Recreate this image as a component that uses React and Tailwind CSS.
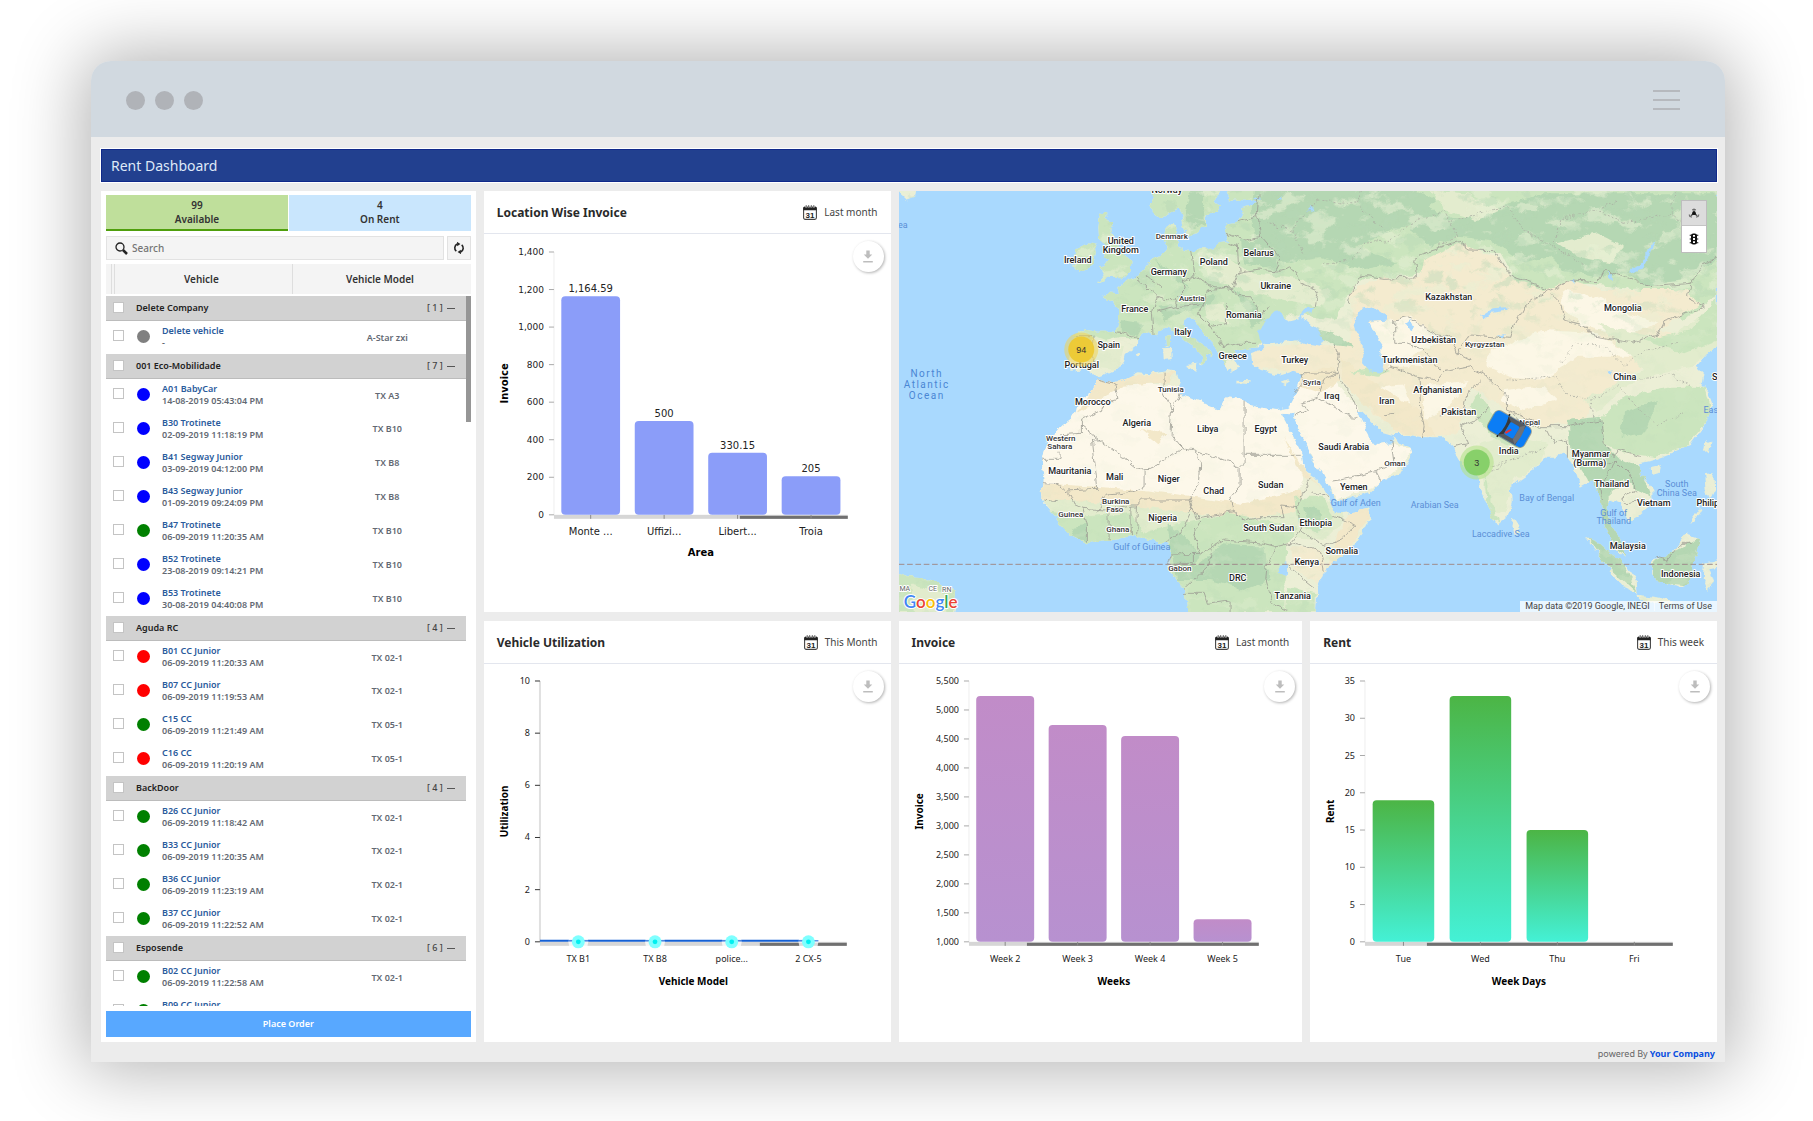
import React from "react";

const COLORS = {
  gray: "bg-[#808080]",
  blue: "bg-[#0000ff]",
  green: "bg-[#008000]",
  red: "bg-[#ff0000]",
};

const GROUPS = [
  { name: "Delete Company", count: 1, items: [["Delete vehicle", "-", "A-Star zxi", "gray"]] },
  {
    name: "001 Eco-Mobilidade",
    count: 7,
    items: [
      ["A01 BabyCar", "14-08-2019 05:43:04 PM", "TX A3", "blue"],
      ["B30 Trotinete", "02-09-2019 11:18:19 PM", "TX B10", "blue"],
      ["B41 Segway Junior", "03-09-2019 04:12:00 PM", "TX B8", "blue"],
      ["B43 Segway Junior", "01-09-2019 09:24:09 PM", "TX B8", "blue"],
      ["B47 Trotinete", "06-09-2019 11:20:35 AM", "TX B10", "green"],
      ["B52 Trotinete", "23-08-2019 09:14:21 PM", "TX B10", "blue"],
      ["B53 Trotinete", "30-08-2019 04:40:08 PM", "TX B10", "blue"],
    ],
  },
  {
    name: "Aguda RC",
    count: 4,
    items: [
      ["B01 CC Junior", "06-09-2019 11:20:33 AM", "TX 02-1", "red"],
      ["B07 CC Junior", "06-09-2019 11:19:53 AM", "TX 02-1", "red"],
      ["C15 CC", "06-09-2019 11:21:49 AM", "TX 05-1", "green"],
      ["C16 CC", "06-09-2019 11:20:19 AM", "TX 05-1", "red"],
    ],
  },
  {
    name: "BackDoor",
    count: 4,
    items: [
      ["B26 CC Junior", "06-09-2019 11:18:42 AM", "TX 02-1", "green"],
      ["B33 CC Junior", "06-09-2019 11:20:35 AM", "TX 02-1", "green"],
      ["B36 CC Junior", "06-09-2019 11:23:19 AM", "TX 02-1", "green"],
      ["B37 CC Junior", "06-09-2019 11:22:52 AM", "TX 02-1", "green"],
    ],
  },
  {
    name: "Esposende",
    count: 6,
    items: [
      ["B02 CC Junior", "06-09-2019 11:22:58 AM", "TX 02-1", "green"],
      ["B09 CC Junior", "", "", "green"],
    ],
  },
];

function Check({ label }) {
  return (
    <input
      type="checkbox"
      aria-label={label}
      className="block size-[11px] shrink-0 appearance-none border border-[#c4c4c4] bg-white checked:bg-[#58a8ff]"
    />
  );
}

function VehiclePanel() {
  return (
    <aside className="row-span-2 flex flex-col bg-white px-[5px] pt-1 pb-[5px]">
      <div className="flex h-9 shrink-0 gap-px text-[10px] leading-[14px] font-semibold text-[#333]">
        <button className="flex-1 border-b-2 border-[#4f9f0c] bg-[#bfdf9b]">
          99
          <br />
          Available
        </button>
        <button className="flex-1 border-b-2 border-[#c9e6fd] bg-[#c9e6fd]">
          4
          <br />
          On Rent
        </button>
      </div>

      <div className="mt-[5px] flex h-6 shrink-0 gap-[3px]">
        <label className="flex flex-1 items-center gap-1 border border-[#e2e2e2] bg-[#f4f4f4] pl-2">
          <svg viewBox="0 0 13 13" className="size-[13px] shrink-0" fill="none" stroke="#222" aria-hidden="true">
            <circle cx="5" cy="5" r="4" strokeWidth="1.3" />
            <path d="M8 8l4 4" strokeWidth="2.5" />
          </svg>
          <input
            type="text"
            aria-label="Search"
            placeholder="Search"
            className="w-full bg-transparent text-[10px] font-medium outline-none placeholder:text-[#757575]"
          />
        </label>
        <button
          aria-label="Refresh"
          className="flex w-6 items-center justify-center border border-[#e2e2e2] bg-[#f4f4f4]"
        >
          <svg viewBox="0 0 12 12" className="size-3" aria-hidden="true">
            <path d="M3.300 9.200A4.200 4.200 0 0 1 4.300 2.100M8.700 2.800A4.200 4.200 0 0 1 7.700 9.900" fill="none" stroke="#222" strokeWidth="1.600" />
            <path d="M4 -.2 7.400 2 4.200 4.300ZM8 12.200 4.600 10 7.800 7.700Z" fill="#222" />
          </svg>
        </button>
      </div>

      <div className="relative mt-1 h-0 grow overflow-hidden">
        <table className="w-full table-fixed border-collapse">
          <colgroup>
            <col className="w-[5px]" />
            <col className="w-[3px]" />
            <col className="w-[49%]" />
            <col />
            <col className="w-[5px]" />
          </colgroup>
          <thead>
            <tr className="h-[30px] bg-[#f4f4f4] text-[10px] text-[#333]">
              <td className="border-r border-[#dedede]" />
              <td className="border-r border-[#dedede]" />
              <th className="border-r border-[#dedede] pr-1 font-semibold">Vehicle</th>
              <th colSpan={2} className="pr-1 font-semibold">
                Vehicle Model
              </th>
            </tr>
            <tr className="h-[2px]">
              <td colSpan={5} />
            </tr>
          </thead>
          {GROUPS.map((g) => (
            <tbody key={g.name}>
              <tr className="h-6">
                <td colSpan={4} className="border-b border-[#bcbcbc] bg-[#d2d2d2] p-0">
                  <div className="flex items-center pr-[11px] pl-[7px] text-[9px] leading-3 text-[#222]">
                    <Check label={"Select " + g.name} />
                    <span className="ml-3 flex-1 font-semibold">{g.name}</span>
                    <span className="mr-1 font-medium text-[#444]">[ {g.count} ]</span>
                    <button aria-label={"Collapse " + g.name} className="mt-0.5 h-px w-2 bg-[#555]" />
                  </div>
                </td>
                <td />
              </tr>
              {g.items.map(([name, time, model, color]) => (
                <tr key={name} className="h-[34px]">
                  <td colSpan={3} className="p-0">
                    <div className="flex items-center pl-[7px]">
                      <span className="pb-1">
                        <Check label={"Select " + name} />
                      </span>
                      <span className="mr-3 ml-[13px] pb-0.5">
                        <span className={"block size-[13px] rounded-full " + COLORS[color]} />
                      </span>
                      <span className="text-[9px] leading-3 font-semibold">
                        <a href="#vehicle" className="block text-[#2a5b9c]">
                          {name}
                        </a>
                        <span className="block min-h-3 text-[#636973]">{time}</span>
                      </span>
                    </div>
                  </td>
                  <td className="p-0 pl-4 text-center text-[9px] font-semibold text-[#636973]">{model}</td>
                  <td />
                </tr>
              ))}
            </tbody>
          ))}
        </table>
        <div className="absolute top-8 right-0 h-[126px] w-[5px] bg-[#969696]" />
      </div>

      <button className="mt-[5px] h-[26px] shrink-0 bg-[#58a8ff] text-[9px] font-semibold text-white">Place Order</button>
    </aside>
  );
}

function CalendarIcon() {
  return (
    <svg viewBox="0 0 14 15" className="h-[15px] w-[14px]" aria-hidden="true">
      <rect x="0.6" y="2" width="12.8" height="12.4" rx="1.6" fill="#fff" stroke="#444" strokeWidth="1.1" />
      <path d="M0.4 5.2V3.2q0-1.4 1.4-1.4h10.4q1.400 0 1.4 1.4v2z" fill="#222" />
      <path d="M3.2.4v2.200M5.7.4v2.200M8.3.4v2.200M10.8.4v2.200" stroke="#fff" strokeWidth="1.8" />
      <path d="M3.2.2v2.200M5.7.2v2.200M8.3.2v2.200M10.8.2v2.200" stroke="#222" strokeWidth="0.8" />
      <text x="7" y="12.900" textAnchor="middle" fontFamily="'Liberation Sans', sans-serif" fontSize="8" fontWeight="700" fill="#222">
        31
      </text>
    </svg>
  );
}

function ChartCard({ title, period, children }) {
  return (
    <section className="flex min-w-0 flex-col bg-white">
      <header className="flex h-[43px] shrink-0 items-center justify-between border-b border-[#e3e6ee] px-[13px] pt-px">
        <h2 className="text-[12px] font-bold text-[#2a2a2a]">{title}</h2>
        <button className="flex items-center gap-[7px] text-[10px] text-[#444]">
          <CalendarIcon />
          {period}
        </button>
      </header>
      <div className="relative">
        {children}
        <button
          aria-label={"Download " + title}
          className="absolute top-[7px] right-[7px] flex size-[31px] items-center justify-center rounded-full bg-white shadow-[1px_1px_3px_rgba(0,0,0,0.3)]"
        >
          <svg viewBox="0 0 12 13" className="h-[13px] w-3" fill="#bdbdbd" aria-hidden="true">
            <path d="M4.3 0.5h3.4v4h2.6L6 8.8 1.7 4.5h2.6z" />
            <rect x="1.2" y="11" width="9.6" height="1.5" />
          </svg>
        </button>
      </div>
    </section>
  );
}

/* Geometry: x0..x1 is the category axis, top..bottom the value axis. */
function Chart({ width, x0, x1, top, bottom, min, max, step, data, thumb, xTitle, yTitle, fill, verdana, line }) {
  const scale = (v) => bottom - ((v - min) / (max - min)) * (bottom - top);
  const ticks = [];
  for (let v = min; v <= max; v += step) ticks.push(v);
  const cell = (x1 - x0) / data.length;
  const family = verdana ? "'DejaVu Sans', sans-serif" : "'Noto Sans', sans-serif";
  const labelSize = verdana ? 10 : 9;
  const id = "fill-" + yTitle + width;
  return (
    <svg viewBox={`0 0 ${width} 378`} className="block w-full" fontFamily={family} fontSize="9" fill="#222" role="img" aria-label={yTitle + " by " + xTitle}>
      <defs>
        <linearGradient id={id} x1="0" y1="0" x2="0" y2="1">
          <stop offset="0" stopColor={fill[0]} />
          <stop offset="1" stopColor={fill[1]} />
        </linearGradient>
      </defs>
      <path d={`M${x0} ${top}V${bottom}`} stroke={line ? "#e0e0e0" : "#eee"} strokeWidth={line ? 2 : 1} />
      {ticks.map((v) => (
        <g key={v}>
          <path d={`M${x0 - 5} ${scale(v)}h5`} stroke={line ? "#333" : "#aaa"} />
          <text x={x0 - 10} y={scale(v) + 3} textAnchor="end">
            {v.toLocaleString("en-US")}
          </text>
        </g>
      ))}
      <rect x={x0} y={bottom} width={x1 - x0} height="4" fill="#d6d6d6" />
      <rect x={thumb} y={bottom + 1} width={x1 - thumb} height="3" fill="#707070" />
      {line && <path d={`M${x0} ${bottom - 1}H${x1 - cell / 2}`} stroke="#1560d4" strokeWidth="2" />}
      {data.map(([label, value], i) => {
        const cx = x0 + cell * (i + 0.5);
        return (
          <g key={label}>
            {line ? (
              <g>
                <circle cx={cx} cy={bottom} r="10" fill="#fff" fillOpacity="0.75" />
                <path d={`M${cx - 10} ${bottom - 1}h20`} stroke="#1560d4" strokeWidth="1" />
                <circle cx={cx} cy={bottom} r="6.5" fill="#7fffff" />
                <circle cx={cx} cy={bottom} r="2.4" fill="#00f0f0" />
              </g>
            ) : (
              <g>
                <path d={`M${cx} ${bottom}v4`} stroke="#8a8a8a" strokeWidth="1" />
                {value > min && (
                  <rect x={cx - cell * 0.4} y={scale(value)} width={cell * 0.8} height={bottom - scale(value)} rx="4" fill={`url(#${id})`} />
                )}
              </g>
            )}
            {verdana && (
              <text x={cx} y={scale(value) - 4} textAnchor="middle" fontSize={labelSize}>
                {value.toLocaleString("en-US")}
              </text>
            )}
            <text x={cx} y={bottom + 20} textAnchor="middle" fontSize={labelSize}>
              {label}
            </text>
          </g>
        );
      })}
      <text x={(x0 + x1) / 2} y={bottom + (verdana ? 41 : 43)} textAnchor="middle" fontSize="10" fontWeight="700" fill="#000">
        {xTitle}
      </text>
      <text transform={`translate(24 ${(top + bottom) / 2}) rotate(-90)`} textAnchor="middle" fontSize="10" fontWeight="700" fill="#000">
        {yTitle}
      </text>
    </svg>
  );
}

const LAND = [
  // Eurasia and Africa
  "M2481 20V500L2450 520 2415 560 2435 580 2430 610 2455 640 2465 680 2440 740 2400 795 2330 825 2290 840 2245 850 2250 880 2285 930 2285 970 2245 1005 2210 1025 2190 970 2155 955 2150 990 2160 1030 2185 1070 2205 1130 2175 1105 2150 1050 2135 1010 2130 960 2115 920 2105 900 2070 920 2050 860 2035 835 2020 820 1990 830 1970 830 1940 860 1890 895 1860 920 1863 970 1850 1010 1820 1035 1790 980 1765 920 1755 870 1720 860 1700 825 1690 800 1660 772 1595 772 1550 765 1510 765 1475 755 1440 720 1415 695 1398 695 1410 720 1435 765 1438 780 1448 792 1465 795 1500 790 1512 768 1520 790 1555 800 1562 825 1530 880 1470 905 1440 935 1380 955 1335 962 1320 930 1295 880 1260 830 1230 760 1203 702 1212 715 1205 700 1170 698 1205 765 1232 820 1240 870 1270 890 1295 920 1315 955 1330 990 1345 1000 1390 995 1440 985 1440 1010 1415 1060 1380 1110 1330 1145 1295 1180 1280 1220 1275 1310H892L885 1260 880 1225 850 1190 835 1160 840 1105 830 1085 775 1085 740 1063 680 1078 640 1080 590 1090 540 1065 510 1035 490 1005 458 970 450 935 462 905 456 870 452 835 465 800 485 770 510 735 555 700 562 665 600 640 620 598 660 608 700 597 740 577 780 580 830 570 858 575 868 600 860 625 870 645 900 655 930 665 960 682 985 690 992 662 1020 650 1060 662 1080 675 1130 687 1160 690 1195 683 1207 660 1220 630 1228 600 1236 578 1210 572 1170 585 1135 575 1110 570 1085 550 1080 520 1100 512 1125 508 1115 498 1090 500 1060 505 1030 510 1045 530 1030 540 1042 560 1025 578 1008 560 990 530 975 500 948 470 920 442 915 418 895 408 878 422 885 450 905 475 930 495 955 510 968 528 945 522 948 540 928 555 935 528 908 500 878 480 850 455 828 440 790 465 760 455 742 470 742 495 705 522 700 542 682 565 650 580 620 590 605 583 580 568 540 572 535 540 545 500 548 465 580 448 620 455 678 455 685 420 685 385 670 365 633 352 655 338 685 340 680 322 710 302 742 288 765 265 780 242 802 232 818 215 830 200 820 175 824 145 848 125 860 150 852 170 862 195 882 207 905 212 930 205 970 207 985 190 1012 187 1005 160 1010 130 1045 125 1057 105 1052 85 1085 76 1115 72 1075 62 1020 58 1008 40 1015 20Z",
  // Scandinavia
  "M775 20 790 50 778 75 788 102 815 112 840 95 862 85 872 110 880 142 896 168 918 160 942 140 942 110 975 98 988 80 972 62 990 20Z",
  // Great Britain and Ireland
  "M625 98 655 100 640 118 668 125 655 150 672 180 695 215 722 250 720 270 700 292 660 290 622 308 645 280 625 262 660 240 640 225 650 200 622 175 620 140Z",
  "M580 190 610 192 618 215 612 255 560 275 545 258 560 210Z",
  // Mediterranean islands
  "M826 470l10 -2 2 28 -8 6zM820 505l18 -2 2 35 -18 2zM882 555l38 -4 -4 24zM1040 602l40 2 -2 8 -38 -2zM1172 608l22 -8 -6 16zM735 524l12 -3 1 9 -10 2z",
  // Sri Lanka, Hainan, Taiwan
  "M1868 1012l18 28 0 22 -16 2 -8 -22zM2280 862l28 -6 -4 20 -20 6zM2448 780l14 8 -8 32 -12 -10z",
  // Indonesia, Borneo, Philippines
  "M2082 1072 2125 1088 2165 1125 2200 1150 2235 1200 2238 1242 2200 1225 2165 1185 2130 1130ZM2236 1244 2290 1250 2345 1262 2330 1274 2250 1262ZM2282 1140 2320 1135 2350 1110 2385 1062 2428 1078 2412 1130 2405 1185 2380 1225 2310 1210 2285 1180ZM2440 1150 2481 1138V1160L2455 1165 2470 1210 2450 1232 2436 1195ZM2440 882 2468 880 2470 930 2455 960 2445 930ZM2400 1030 2430 985 2434 990 2410 1030Z",
  // Brazil and Greenland
  "M10 1175 50 1192 95 1195 140 1210 185 1232 200 1262 192 1310H10ZM10 20H75L70 50 50 58Z",
].join("");

const TERRAIN = [
  // northern forest belt
  ["#cbe5be", "M500 0H2500V330L2380 420 2250 330 2080 310 1980 330 1900 350 1830 220 1700 210 1600 280 1400 300 1330 420 1200 400 1100 500 980 560 900 540 800 480 690 470 520 520Z"],
  ["#b5d7b3", "M1090 20H1560L1640 60 1560 130 1400 200 1520 250 1420 270 1290 230 1180 250 1100 200 1080 110ZM1560 60 1700 120 1760 100 1960 40H2481V240L2380 300 2270 320 2200 280 2120 290 2020 270 1980 230 1900 250 1800 180 1700 170 1620 200 1560 150Z"],
  ["#e3ecce", "M560 520 620 470 700 500 680 570 580 560ZM1010 230 1080 280 1200 290 1320 330 1300 380 1180 360 1060 330 960 300 920 220ZM1620 30 1720 40 1830 90 1760 120 1660 90ZM2000 190 2120 160 2200 200 2160 250 2060 230ZM940 375 1000 370 1020 430 950 420Z"],
  ["#b5d7b3", "M790 240 870 290 900 330 850 300ZM900 30H940V130L900 150 880 100ZM800 380 920 365 970 340 960 372 880 395 820 420ZM1030 330 1090 370 1120 420 1080 440 1060 380ZM690 420 760 430 740 465 690 455ZM1050 180 1150 190 1160 270 1060 250ZM1130 40 1200 130 1180 180 1110 120Z"],
  // steppe
  ["#f4ebcf", "M1380 330 1480 290 1590 290 1600 240 1700 190 1820 230 1870 300 1960 330 2040 300 2130 330 2380 330 2430 370 2300 450 2400 470 2380 520 2260 560 2140 640 2080 720 1960 740 1840 690 1740 620 1700 760 1600 770 1440 700 1380 590 1240 580 1080 560 1090 510 1230 490 1320 500 1380 480Z"],
  ["#fcf7e6", "M1430 430 1560 410 1660 480 1560 530 1600 560 1500 560 1460 500ZM1800 510 1960 450 2120 460 2240 530 2060 530 1960 600 1860 590 1790 560ZM1840 630 1960 620 2000 660 1900 690 1830 660ZM2010 330 2120 350 2200 400 2300 430 2200 470 2080 440 2020 390ZM1600 620 1740 600 1660 690 1600 720ZM1440 620 1540 610 1560 680 1500 700Z"],
  ["#fdf8ea", "M1210 610 1320 590 1400 680 1450 780 1570 810 1480 910 1340 960 1220 760Z"],
  ["#f3e8c9", "M1230 580 1320 560 1350 600 1290 640 1230 620ZM1350 530 1440 600 1580 690 1640 770 1520 760 1440 690 1360 610Z"],
  // subtropical Asia
  ["#e2eccd", "M1770 790 1860 760 1970 790 1950 850 1870 900 1840 1000 1800 990 1770 880ZM2120 430 2320 480 2481 380V500L2400 560 2300 580 2200 620 2120 700 2080 660 2260 570Z"],
  ["#cbe5be", "M2110 740 2200 650 2330 620 2440 620 2465 700 2390 800 2290 830 2200 820 2130 790ZM2260 480 2400 450 2481 350V480L2380 520ZM1760 640 1840 740 1900 760 1880 800 1800 770 1740 680ZM1380 575 1460 590 1500 575 1450 560ZM1780 870 1800 960 1830 1030 1790 1000Z"],
  ["#b5d7b3", "M2030 720 2130 710 2140 790 2180 830 2250 860 2280 950 2200 900 2150 950 2205 1130 2140 1050 2090 900 2040 820ZM2090 1070 2180 1110 2240 1240 2150 1160ZM2280 1150 2430 1070 2400 1220 2300 1210ZM2200 700 2300 660 2260 760 2190 770ZM1245 440 1330 460 1390 500 1320 490Z"],
  // Sahara, Sahel and the equatorial belt
  ["#fdf8ea", "M600 600 1240 650 1240 900 1200 960 1000 980 450 980 450 800Z"],
  ["#f3e8c9", "M600 595 860 575 830 610 700 620 640 650 560 700 600 640ZM750 750 830 760 800 790ZM450 910 760 930 1060 970 1230 930 1250 1000 1060 1010 880 1000 640 990 450 960ZM1180 770 1240 870 1290 920 1230 880ZM1400 960 1440 1000 1360 1130 1300 1200 1340 1060Z"],
  ["#e2eccd", "M450 960 700 970 900 1000 1060 1020 1230 990 1330 960 1360 1020 1300 1080 1100 1060 900 1060 700 1060 540 1050Z"],
  ["#cbe5be", "M460 990 560 1010 720 1000 760 1060 860 1030 1020 1000 1220 1040 1190 1090 1180 1300 880 1300 840 1160 830 1090 560 1090ZM1210 950 1290 950 1330 1010 1280 1060 1220 1030ZM1190 1220 1275 1240V1300H1180Z"],
  ["#b5d7b3", "M830 1030 870 1060 930 1120 910 1160 1000 1090 1120 1100 1140 1200 1060 1230 960 1200 860 1200 840 1110ZM540 1040 590 1035 590 1085 550 1070ZM1240 980 1290 990 1290 1030 1250 1030Z"],
  ["#f4ebcf", "M1200 1100 1290 1110 1310 1170 1280 1210 1210 1170Z"],
  ["#cbe5be", "M10 1175 120 1200 200 1240 190 1300H10Z"],
  ["#e2eccd", "M60 1210 160 1240 170 1300H70Z"],
];

const BORDERS =
  "M620 600 672 612 682 655 640 665 638 688 572 718 572 760 510 765M572 740 745 870 780 868 872 803 838 760 842 690 820 640 820 575M842 690 862 660 868 640M872 803 915 810 1048 862V920L1020 950 1030 995M915 810 930 850 926 910 898 950M1060 662V855H1048M1062 826H1230M760 872V920L700 940 650 945 630 975 615 1000M602 780H625M602 780 618 925 530 930 490 910 460 908M452 835H508V812M458 960 495 965M530 930 550 975 575 985 590 1040 590 1085M575 985 640 990 720 975 740 975 755 960 898 960 905 985 870 1060 825 1085M720 975 722 1065M655 1000 655 1078M740 975 738 1062M898 950 915 1015 1030 995 1060 1020 1100 1010 1180 1010 1170 975 1220 980 1235 940 1260 890M905 985 930 1020 910 1060 930 1120 1000 1080 1120 1090 1160 1100 1200 1090 1230 1050 1220 980M930 1120 840 1122M965 1090 950 1160 880 1225M880 1240 940 1240 950 1270 1015 1260 1015 1296M1160 1100 1130 1150 1125 1200 1145 1270 1190 1290M1190 1160 1270 1222M1200 1090 1290 1115 1300 1170M1230 1050 1300 1100 1350 1080 1395 1035 1330 1005M1260 935 1310 950M840 1122 830 1150 905 1150 905 1120M1325 900 1360 895 1455 875 1470 905M1455 875 1510 850 1500 780M1210 710 1250 690 1235 670 1280 655 1380 710 1400 712M1280 655 1300 600 1340 580 1230 578M1340 570 1350 600 1380 640 1400 695M1340 570 1345 530 1330 490M1230 578 1240 610 1210 640M1510 700 1480 705M1585 590 1590 690 1600 740 1595 772M1585 590 1500 560 1480 580M1585 590 1640 600 1660 575 1740 560M1650 705 1720 690 1735 630 1770 600M1690 800 1730 790 1710 740 1770 710 1790 680M1512 490V420L1550 410 1640 465 1680 470 1700 520 1740 540M1512 490 1540 490 1600 510 1650 570M1700 520 1740 465 1860 475 1870 440 1900 380 1970 330M1380 340 1410 285 1480 295 1580 290 1575 240 1590 220 1700 185 1735 210 1810 212 1860 290 1950 320 1980 330 2040 300 2120 305 2140 270 2280 320 2400 310 2440 250 2481 235M1980 340 2010 370 2020 420 2080 435 2100 465 2220 488 2300 465 2320 425 2440 380 2390 350 2400 315M1380 340 1375 375M1740 560 1780 580 1850 650 1850 690 1900 710 1950 740 2030 740 2070 730M1870 700 1890 735 1950 745M1970 750 1990 790 2030 780 2030 830M2070 730 2130 720 2140 790 2170 830 2180 810 2250 830M2120 860 2170 840 2150 890 2130 920 2135 960M2170 840 2210 880 2240 930 2190 950 2200 970 2250 960M2290 1130 2330 1140 2370 1090 2400 1090M550 470 610 470M610 470 605 560M678 455 742 470M790 465 785 400 800 350 735 290M765 285 810 320M800 350 850 360 880 330 875 300 910 290 900 210M850 360 860 380 940 370 950 330 1020 320 1040 350 1080 350 1110 410 1130 380M910 290 970 320 1025 325 1045 280 1040 200 1010 190M1045 280 1100 270 1150 275 1170 240 1110 170 1060 180 1005 160M1110 170 1100 100 1105 40M1045 125 1100 110M1150 275 1200 260 1230 310 1280 330 1270 380M940 370 920 400 960 440 1000 500 1040 490 1100 490M960 440 1010 430 1010 370M860 380 800 395";

const DASHED =
  "M1560 130 1500 180 1420 190 1380 240 1300 250M1560 130 1660 90 1700 170 1640 200M1700 120 1850 80 1900 150 1990 200 2010 120 2120 90 2200 130M2120 90 2180 60M1990 200 2080 260M1280 60 1200 150 1240 220M1280 60 1400 70 1480 150M2010 550 2050 490 2140 500 2200 560 2240 520 2360 490M1850 600 2000 590 2020 640 2100 660 2180 620M2180 620 2240 680 2300 740 2380 700M1800 860 1900 830 1960 800M1780 880 1850 850M2240 600 2330 580 2400 620M2100 660 2110 720M1400 70 1420 20M1200 150 1130 130M2200 130 2340 100 2420 160M2340 100 2360 30";

const LAKES =
  "M1105 455 1120 425 1150 398 1172 396 1192 422 1225 415 1240 388 1268 376 1262 395 1236 410 1252 425 1282 450 1303 478 1290 500 1240 492 1210 478 1165 490 1115 495ZM1388 420 1412 388 1445 378 1490 408 1485 422 1435 425 1448 452 1475 492 1468 510 1482 542 1476 578 1436 574 1414 550 1416 500 1400 460ZM1768 408 1800 388 1850 385 1850 392 1800 398 1778 418ZM2215 270 2250 250 2272 215 2288 175 2292 190 2278 230 2260 260 2225 280ZM1545 432l14 -12 8 18 -12 10zM1812 468l30 -6 -4 10zM1160 1155 1190 1150 1188 1188 1162 1182ZM1085 60l22 -8 6 10zM1160 60l8 -16 6 14zM1250 90l10 -12 6 20zM2038 300l12 -4 2 12zM2155 280l8 -2 0 26 -8 -10zM2150 575l12 -4 2 10z";

/* [text, centre x, centre y, kind] */
const LABELS = [
  ["Norway", 268, -1], ["Denmark", 273, 45, "s"], ["United", 222, 50], ["Kingdom", 222, 59], ["Ireland", 179, 69],
  ["Poland", 315, 71], ["Belarus", 360, 62], ["Germany", 270, 81], ["Ukraine", 377, 95], ["Austria", 293, 107, "s"],
  ["France", 236, 118], ["Romania", 345, 124], ["Italy", 284, 141], ["Spain", 210, 154], ["Portugal", 183, 174],
  ["Greece", 334, 165], ["Turkey", 396, 169], ["Tunisia", 272, 198, "s"], ["Morocco", 194, 211], ["Algeria", 238, 232],
  ["Libya", 309, 238], ["Egypt", 367, 238], ["Western", 162, 247, "s"], ["Sahara", 161, 255, "s"], ["Mauritania", 171, 280],
  ["Mali", 216, 286], ["Niger", 270, 288], ["Chad", 315, 300], ["Sudan", 372, 294], ["Burkina", 217, 310, "s"],
  ["Faso", 216, 318, "s"], ["Guinea", 172, 323, "s"], ["Nigeria", 264, 327], ["Ghana", 219, 338, "s"], ["South Sudan", 370, 337],
  ["Gabon", 281, 377, "s"], ["DRC", 339, 387], ["Tanzania", 394, 405], ["Kazakhstan", 550, 106], ["Mongolia", 724, 117],
  ["Uzbekistan", 535, 149], ["Kyrgyzstan", 586, 153, "s"], ["Turkmenistan", 511, 169], ["China", 726, 186], ["S", 816, 186],
  ["Syria", 413, 191, "s"], ["Iraq", 433, 205], ["Iran", 488, 210], ["Afghanistan", 539, 199], ["Pakistan", 560, 221],
  ["Nepal", 631, 231, "s"], ["India", 610, 260], ["Myanmar", 692, 263], ["(Burma)", 691, 272], ["Saudi Arabia", 445, 256],
  ["Oman", 496, 272, "s"], ["Yemen", 455, 296], ["Thailand", 713, 293], ["Vietnam", 755, 312], ["Philip", 809, 312],
  ["Ethiopia", 417, 332], ["Somalia", 443, 360], ["Malaysia", 729, 355], ["Kenya", 408, 371], ["Indonesia", 782, 383],
  ["Gulf of Guinea", 243, 356, "w"], ["Gulf of Aden", 457, 312, "w"], ["Arabian Sea", 536, 314, "w"], ["Bay of Bengal", 648, 307, "w"],
  ["Laccadive Sea", 602, 343, "w"], ["South", 778, 293, "w"], ["China Sea", 778, 302, "w"], ["Gulf of", 715, 322, "w"],
  ["Thailand", 715, 330, "w"], ["Eas", 812, 219, "w"], ["ea", 4, 34, "w"],
  ["North", 28, 183, "o"], ["Atlantic", 28, 194, "o"], ["Ocean", 28, 205, "o"],
  ["MA", 6, 397, "r"], ["CE", 34, 397, "r"], ["RN", 48, 398, "r"],
];

const KIND = {
  m: { fontSize: 9, fontWeight: 500, fill: "#222", stroke: "#fff" },
  s: { fontSize: 8, fontWeight: 500, fill: "#333", stroke: "#fff" },
  w: { fontSize: 9, fontWeight: 400, fill: "#5b8fd6", stroke: "none" },
  o: { fontSize: 10, fontWeight: 400, fill: "#4a86d4", stroke: "none", letterSpacing: 1.5 },
  r: { fontSize: 7, fontWeight: 400, fill: "#666", stroke: "#fff" },
};

function WorldMap() {
  return (
    <section className="relative col-span-2 min-w-0 overflow-hidden bg-[#a9d9fe]" aria-label="Vehicle map">
      <svg viewBox="0 0 819 421" preserveAspectRatio="xMidYMid slice" className="absolute inset-0 size-full" fontFamily="Roboto, sans-serif">
        <defs>
          <clipPath id="land">
            <path d={LAND} />
          </clipPath>
          <filter id="rough" x="0" y="0" width="2500" height="1310" filterUnits="userSpaceOnUse">
            <feTurbulence type="fractalNoise" baseFrequency="0.035" numOctaves="3" seed="4" result="n" />
            <feDisplacementMap in="SourceGraphic" in2="n" scale="22" xChannelSelector="R" yChannelSelector="G" />
          </filter>
          <filter id="patches" x="0" y="0" width="2500" height="1310" filterUnits="userSpaceOnUse">
            <feTurbulence type="fractalNoise" baseFrequency="0.012 0.02" numOctaves="5" seed="11" />
            <feColorMatrix values="0 0 0 0 0.8  0 0 0 0 0.87  0 0 0 0 0.66  9 0 0 0 -4.9" />
          </filter>
          <filter id="relief" x="0" y="0" width="2500" height="1310" filterUnits="userSpaceOnUse">
            <feTurbulence type="fractalNoise" baseFrequency="0.015 0.025" numOctaves="5" seed="27" />
            <feColorMatrix values="0 0 0 0 0.47  0 0 0 0 0.68  0 0 0 0 0.46  0 8 0 0 -4.6" />
          </filter>
          <linearGradient id="north" x1="0" y1="0" x2="0" y2="1">
            <stop offset="0" stopColor="#fff" />
            <stop offset="0.24" stopColor="#fff" stopOpacity="0.9" />
            <stop offset="0.4" stopColor="#fff" stopOpacity="0.15" />
            <stop offset="0.7" stopColor="#fff" stopOpacity="0.1" />
            <stop offset="1" stopColor="#fff" stopOpacity="0.5" />
          </linearGradient>
          <mask id="north-mask" maskUnits="userSpaceOnUse" x="0" y="0" width="2500" height="1310">
            <rect width="2500" height="1310" fill="url(#north)" />
          </mask>
        </defs>
        <g transform="translate(-8 -11) scale(0.33333)">
          <g filter="url(#rough)">
            <path d={LAND} fill="#ecefd6" />
            <g clipPath="url(#land)">
              {TERRAIN.map(([fill, d]) => (
                <path key={d} d={d} fill={fill} />
              ))}
              <g mask="url(#north-mask)">
                <rect width="2500" height="1310" filter="url(#patches)" opacity="0.6" />
                <rect width="2500" height="1310" filter="url(#relief)" opacity="0.45" />
              </g>
            </g>
            <path d={LAKES} fill="#a9d9fe" />
            <path d={BORDERS} fill="none" stroke="#9c9c93" strokeWidth="2.4" />
            <path d={DASHED} fill="none" stroke="#a9aaa0" strokeWidth="2.2" strokeDasharray="6 6" />
          </g>
          <path d="M24 1153H2481" stroke="#a08c8c" strokeWidth="3" strokeDasharray="17 8" />
        </g>
        {LABELS.map(([text, x, y, kind = "m"]) => (
          <text key={text + x} x={x} y={y + 3} textAnchor="middle" strokeWidth="2" strokeLinejoin="round" paintOrder="stroke" {...KIND[kind]}>
            {text}
          </text>
        ))}

        <g fontFamily="'Liberation Sans', sans-serif" fontSize="9" textAnchor="middle" fill="#333">
          <circle cx="182.5" cy="158.5" r="17" fill="#f1d357" fillOpacity="0.55" />
          <circle cx="182.5" cy="158.5" r="13" fill="#edc933" fillOpacity="0.95" />
          <text x="182.5" y="162">94</text>
          <circle cx="578" cy="271.5" r="17" fill="#b5e28c" fillOpacity="0.6" />
          <circle cx="578" cy="271.5" r="13" fill="#84cf66" fillOpacity="0.95" />
          <text x="578" y="275">3</text>
        </g>

        <g transform="translate(610.7 238) rotate(30)">
          <rect x="-21.5" y="-12" width="43" height="24" rx="6" fill="#39404a" opacity="0.45" />
          <rect x="-20.5" y="-11" width="41" height="22" rx="4.500" fill="#0b7df5" />
          <path d="M-7 -11H13V11H-7Q-3.500 0 -7 -11Z" fill="#55595f" />
          <path d="M-7 -10.500q3.500 10.500 0 21l4.500 -3.500V-7z" fill="#34383e" />
          <path d="M12 -11q3.500 11 0 22l-4 -4V-7z" fill="#6d7178" />
          <rect x="-2.500" y="-7" width="10.500" height="14" rx="1.500" fill="#0b7df5" />
          <path d="M-2.500 5 1 -1 2.500 0 -0.500 6z" fill="#e33" />
          <path d="M-7 -11v-2M-7 11v2" stroke="#222" strokeWidth="1.500" />
        </g>

        <text x="5" y="417" fontFamily="Lato, sans-serif" fontSize="17" fontWeight="600" stroke="#fff" strokeWidth="2" paintOrder="stroke">
          <tspan fill="#4285f4">G</tspan>
          <tspan fill="#ea4335">o</tspan>
          <tspan fill="#fbbc05">o</tspan>
          <tspan fill="#4285f4">g</tspan>
          <tspan fill="#34a853">l</tspan>
          <tspan fill="#ea4335">e</tspan>
        </text>
      </svg>

      <div className="absolute top-[9px] right-[10px] flex w-[26px] flex-col border border-[#bdbdbd]">
        <button aria-label="Cluster view" className="flex h-[25px] items-center justify-center border-b border-[#c4c4c4] bg-[#dcdcdc]">
          <svg viewBox="0 0 12 12" className="size-3" aria-hidden="true">
            <path d="M6 6.500V3.500M6 6.500 3 8.500M6 6.500l3 2" stroke="#333" strokeWidth="1.200" />
            <circle cx="6" cy="6.200" r="1.900" fill="#111" />
            <path d="M4 3q2 -2.400 4 0z M1 7.500q-.4 3 3 2.700z M11 7.500q.4 3 -3 2.700z" fill="#777" stroke="#666" strokeWidth="0.500" />
          </svg>
        </button>
        <button aria-label="Traffic" className="flex h-[26px] items-center justify-center bg-white">
          <svg viewBox="0 0 12 12" className="size-3" aria-hidden="true">
            <rect x="3" y="0.500" width="6" height="11" rx="2.200" fill="#111" />
            <path d="M1.700 2.300h8.600M1.700 6h8.600M1.700 9.700h8.600" stroke="#111" strokeWidth="1.100" />
            <path d="M6 2v1.800M6 5.100v1.800M6 8.200V10" stroke="#fff" strokeWidth="2" />
          </svg>
        </button>
      </div>

      <div className="absolute right-0 bottom-0 flex h-[11px] items-center bg-white/75 px-[5px] font-[Roboto] text-[9px] leading-none text-[#444]">
        <span className="mr-1 border-r border-white/60 pr-1">Map data ©2019 Google, INEGI</span>
        <a href="#terms">Terms of Use</a>
      </div>
    </section>
  );
}

export default function App() {
  return (
    <div className="flex min-h-screen flex-col bg-white pt-[61px] pr-[88px] pb-[59px] pl-[91px] font-['Noto_Sans',sans-serif]">
      <div className="flex flex-1 flex-col rounded-t-[20px] bg-[#ececec] shadow-[0_0_70px_8px_rgba(0,0,0,0.3)]">
        <div className="flex h-[76px] shrink-0 items-center justify-between rounded-t-[20px] bg-[#d1d9e0] pt-0.5 pr-[45px] pl-[35px]">
          <div className="flex gap-[10px]">
            <span className="size-[19px] rounded-full bg-[#b0b3b8]" />
            <span className="size-[19px] rounded-full bg-[#b0b3b8]" />
            <span className="size-[19px] rounded-full bg-[#b0b3b8]" />
          </div>
          <button aria-label="Menu" className="flex w-[27px] flex-col gap-[7px] py-1">
            <span className="h-0.5 bg-[#b6b9be]" />
            <span className="h-0.5 bg-[#b6b9be]" />
            <span className="h-0.5 bg-[#b6b9be]" />
          </button>
        </div>

        <div className="flex flex-1 flex-col pt-3 pr-2 pl-[10px]">
          <h1 className="flex h-[33px] shrink-0 items-center border border-[#10298a] bg-[#22408f] px-[9px] text-[14px] text-[#dfe9f8] outline outline-white">
            Rent Dashboard
          </h1>

          <main className="mt-[9px] grid flex-1 grid-cols-[375fr_407fr_404fr_407fr] grid-rows-2 gap-x-2 gap-y-[9px]">
            <VehiclePanel />
            <ChartCard title="Location Wise Invoice" period="Last month">
              <Chart
                verdana width={407} x0={70} x1={364} top={18} bottom={281} min={0} max={1400} step={200} thumb={256}
                fill={["#8b9df9", "#8b9df9"]} xTitle="Area" yTitle="Invoice"
                data={[["Monte ...", 1164.59], ["Uffizi...", 500], ["Libert...", 330.15], ["Troia", 205]]}
              />
            </ChartCard>
            <WorldMap />
            <ChartCard title="Vehicle Utilization" period="This Month">
              <Chart
                line width={407} x0={56} x1={363} top={17} bottom={278} min={0} max={10} step={2} thumb={276}
                fill={["#7fffff", "#7fffff"]} xTitle="Vehicle Model" yTitle="Utilization"
                data={[["TX B1", 0], ["TX B8", 0], ["police...", 0], ["2 CX-5", 0]]}
              />
            </ChartCard>
            <ChartCard title="Invoice" period="Last month">
              <Chart
                width={404} x0={70} x1={360} top={17} bottom={278} min={1000} max={5500} step={500} thumb={128}
                fill={["#c18cc8", "#b791d0"]} xTitle="Weeks" yTitle="Invoice"
                data={[["Week 2", 5240], ["Week 3", 4740], ["Week 4", 4550], ["Week 5", 1390]]}
              />
            </ChartCard>
            <ChartCard title="Rent" period="This week">
              <Chart
                width={407} x0={55} x1={363} top={17} bottom={278} min={0} max={35} step={5} thumb={117}
                fill={["#4cb545", "#44f1d6"]} xTitle="Week Days" yTitle="Rent"
                data={[["Tue", 19], ["Wed", 33], ["Thu", 15], ["Fri", 0]]}
              />
            </ChartCard>
          </main>

          <footer className="flex h-5 shrink-0 items-center justify-end gap-0.5 pt-1 pr-[2px] text-[9px] text-[#666]">
            powered By
            <a href="#company" className="font-bold text-[#0a4fe0]">
              Your Company
            </a>
          </footer>
        </div>
      </div>
    </div>
  );
}
